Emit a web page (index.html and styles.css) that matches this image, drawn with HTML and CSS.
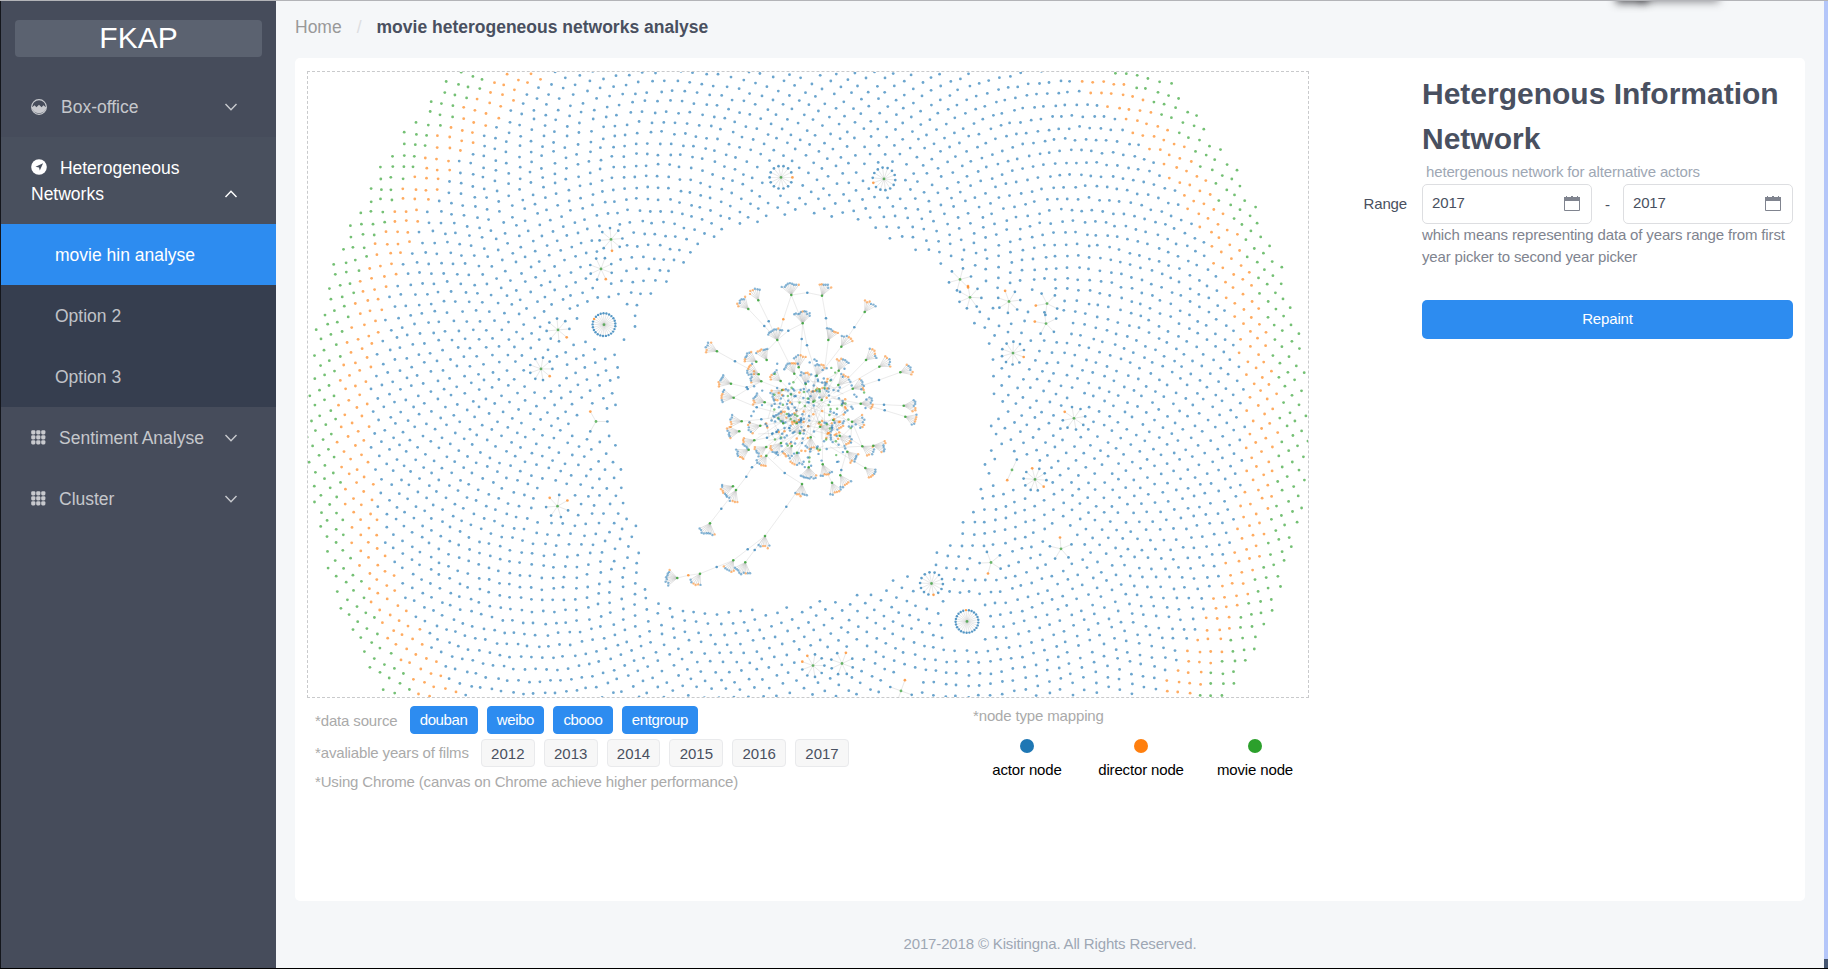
FILE: index.html
```html
<!DOCTYPE html>
<html lang="en">
<head>
<meta charset="utf-8">
<title>FKAP</title>
<link rel="stylesheet" href="styles.css">
</head>
<body>
<div class="app">
  <aside class="sidebar">
    <div class="logo">FKAP</div>
    <nav class="menu">
      <div class="item">
        <svg class="ico" viewBox="0 0 16 16"><circle cx="8" cy="8" r="7.4" fill="none" stroke="currentColor" stroke-width="1.1"/><path d="M.8 8.600 3.6 6.200 5.400 8.200 8 5.800l2.600 2.400 1.800-2 2.800 2.400A7.4 7.4 0 0 1 .8 8.600Z" fill="currentColor"/></svg>
        <span class="label label-box">Box-office</span>
        <svg class="chev" viewBox="0 0 14 14"><path d="M1.5 4 7 9.8 12.5 4" /></svg>
      </div>
      <div class="item item-open">
        <div class="wrapped">
          <svg class="ico" viewBox="0 0 16 16"><circle cx="8" cy="8" r="7.8" fill="currentColor"/><path d="M12.1 4.2 8.8 11.6 8 8.5 4.5 7.8Z" fill="#49505e"/></svg>
          <span class="label-hin">Heterogeneous</span><br>Networks
        </div>
        <svg class="chev" viewBox="0 0 14 14"><path d="M1.5 10 7 4.2 12.5 10" /></svg>
      </div>
      <div class="sub active">movie hin analyse</div>
      <div class="sub">Option 2</div>
      <div class="sub">Option 3</div>
      <div class="item">
        <svg class="grid" viewBox="0 0 15 15"><g fill="currentColor"><rect x=".2" y=".2" width="4.2" height="4.2" rx="1.3"/><rect x="5.2" y=".2" width="4.2" height="4.2" rx="1.3"/><rect x="10.2" y=".2" width="4.2" height="4.2" rx="1.3"/><rect x=".2" y="5.2" width="4.2" height="4.2" rx="1.3"/><rect x="5.2" y="5.2" width="4.2" height="4.2" rx="1.3"/><rect x="10.2" y="5.2" width="4.2" height="4.2" rx="1.3"/><rect x=".2" y="10.2" width="4.2" height="4.2" rx="1.3"/><rect x="5.2" y="10.2" width="4.2" height="4.2" rx="1.3"/><rect x="10.2" y="10.2" width="4.2" height="4.2" rx="1.3"/></g></svg>
        <span class="label">Sentiment Analyse</span>
        <svg class="chev" viewBox="0 0 14 14"><path d="M1.5 4 7 9.8 12.5 4" /></svg>
      </div>
      <div class="item">
        <svg class="grid" viewBox="0 0 15 15"><g fill="currentColor"><rect x=".2" y=".2" width="4.2" height="4.2" rx="1.3"/><rect x="5.2" y=".2" width="4.2" height="4.2" rx="1.3"/><rect x="10.2" y=".2" width="4.2" height="4.2" rx="1.3"/><rect x=".2" y="5.2" width="4.2" height="4.2" rx="1.3"/><rect x="5.2" y="5.2" width="4.2" height="4.2" rx="1.3"/><rect x="10.2" y="5.2" width="4.2" height="4.2" rx="1.3"/><rect x=".2" y="10.2" width="4.2" height="4.2" rx="1.3"/><rect x="5.2" y="10.2" width="4.2" height="4.2" rx="1.3"/><rect x="10.2" y="10.2" width="4.2" height="4.2" rx="1.3"/></g></svg>
        <span class="label">Cluster</span>
        <svg class="chev" viewBox="0 0 14 14"><path d="M1.5 4 7 9.8 12.5 4" /></svg>
      </div>
    </nav>
  </aside>
  <main class="main">
    <div class="crumbs"><span class="home">Home</span><span class="sep">/</span><b>movie heterogeneous networks analyse</b></div>
    <section class="card">
      <div class="left">
        <div class="canvas"><svg id="net" viewBox="308 72 1000 625"></svg></div>
        <div class="info">
          <div class="notes">
            <div class="row"><span class="note">*data source</span><span class="tag blue">douban</span><span class="tag blue">weibo</span><span class="tag blue">cbooo</span><span class="tag blue">entgroup</span></div>
            <div class="row"><span class="note">*avaliable years of films</span><span class="tag">2012</span><span class="tag">2013</span><span class="tag">2014</span><span class="tag">2015</span><span class="tag">2016</span><span class="tag">2017</span></div>
            <div class="row last"><span class="note">*Using Chrome (canvas on Chrome achieve higher performance)</span></div>
          </div>
          <div class="mapping">
            <div class="note">*node type mapping</div>
            <div class="legend">
              <div class="key"><i class="dot actor"></i>actor node</div>
              <div class="key"><i class="dot director"></i>director node</div>
              <div class="key"><i class="dot movie"></i>movie node</div>
            </div>
          </div>
        </div>
      </div>
      <div class="form">
        <h1>Hetergenous Information Network</h1>
        <div class="hint">hetergenous network for alternative actors</div>
        <div class="range">Range</div>
        <div class="pickers">
          <div class="picker">2017<svg class="cal" viewBox="0 0 16 16"><path d="M.5 5V15.500H15.500V5" fill="none" stroke="#80848f" stroke-width="1"/><path d="M0 2H2V1h1v1h4V1h2v1h4V1h1v1h2V6H0Z" fill="#80848f"/></svg></div>
          <span class="dash">-</span>
          <div class="picker">2017<svg class="cal" viewBox="0 0 16 16"><path d="M.5 5V15.500H15.500V5" fill="none" stroke="#80848f" stroke-width="1"/><path d="M0 2H2V1h1v1h4V1h2v1h4V1h1v1h2V6H0Z" fill="#80848f"/></svg></div>
        </div>
        <div class="desc">which means representing data of years range from first year picker to second year picker</div>
        <button class="repaint">Repaint</button>
      </div>
    </section>
    <footer class="footer">2017-2018 © Kisitingna. All Rights Reserved.</footer>
  </main>
  <div class="edge"></div>
  <div class="shade"></div>
</div>
<script src="network.js"></script>
</body>
</html>
```
FILE: styles.css
```css
* { box-sizing: border-box; }
body { margin: 0; font-family: "Liberation Sans", Arial, sans-serif; font-size: 15px; letter-spacing: -.15px; color: #495060; background: #f5f7f9; }
.app { position: relative; display: flex; width: 1828px; height: 969px; overflow: hidden; border-top: 1px solid #b3b4b8; border-bottom: 1px solid #000; }

.sidebar { width: 276px; background: #464c5b; border-left: 1px solid #14161c; flex: none; letter-spacing: 0; }
.logo { margin: 19px 14px 19px; height: 37px; border-radius: 4px; background: #5b6270; color: #fff; font-size: 30px; line-height: 35px; text-align: center; }
.menu { color: rgba(255, 255, 255, .7); font-size: 17.5px; }
.item { display: flex; align-items: center; height: 61px; padding: 0 38px 0 30px; }
.item-open { height: 87px; color: #fff; background: #49505e; align-items: flex-end; padding-bottom: 17px; line-height: 26px; }
.wrapped { flex: 1; }
.ico { width: 16px; height: 16px; flex: none; vertical-align: -1px; }
.grid { width: 15px; height: 15px; flex: none; margin-top: -1px; }
.label { margin-left: 13px; padding-top: 2px; flex: 1; white-space: nowrap; }
.label-box { margin-left: 14px; }
.label-hin { margin-left: 8px; }
.chev { width: 14px; height: 14px; flex: none; fill: none; stroke: currentColor; stroke-width: 1.4; }
.item-open .chev { margin-bottom: 6px; }
.sub { height: 61px; line-height: 63px; padding-left: 54px; background: #363e4f; }
.sub.active { background: #2d8cf0; color: #fff; }

.main { flex: 1; display: flex; flex-direction: column; padding: 0 19px; }
.crumbs { height: 57px; padding-top: 15px; font-size: 17.5px; line-height: 22px; letter-spacing: 0; }
.home { color: #999; }
.sep { color: #dddee1; margin: 0 15px; }
.card { height: 843px; flex: none; display: flex; background: #fff; border-radius: 5px; padding: 13px 12px; }
.left { width: 1002px; flex: none; }
.canvas { height: 627px; border: 1px dashed #c9cacc; }
.canvas svg { display: block; width: 1000px; height: 625px; }
.info { display: flex; padding: 6px 0 0 8px; }
.notes { width: 658px; flex: none; }
.row { display: flex; align-items: center; height: 33px; }
.row:first-child { height: 32px; }
.row.last { height: 25px; }
.note { color: #aaa; }
.row .note { margin-right: 3px; }
.tag { height: 28px; line-height: 27px; padding: 0 9.200px; margin-left: 9.100px; letter-spacing: 0; border: 1px solid #e9eaec; border-radius: 4px; background: #f7f7f7; }
.tag.blue { background: #2d8cf0; border-color: #2d8cf0; color: #fff; letter-spacing: -.4px; line-height: 26px; }
.mapping { flex: none; padding-top: 3px; }
.legend { display: flex; margin: 15px 0 0 -3px; color: #000; }
.key { width: 114px; flex: none; display: flex; flex-direction: column; align-items: center; gap: 8px; white-space: nowrap; }
.dot { width: 14px; height: 14px; border-radius: 50%; }
.actor { background: #1f77b4; }
.director { background: #ff7f0e; }
.movie { background: #2ca02c; }

.form { flex: 1; display: grid; grid-template-columns: 113px 371px; grid-template-rows: 90px 23px 40px 76px 39px; align-content: start; }
.form > * { grid-column: 2; }
h1 { margin: 0; font-size: 30px; line-height: 45px; letter-spacing: 0; }
.hint { color: #9ea7b4; padding-left: 4px; line-height: 21px; }
.form .range { grid-column: 1; grid-row: 3; line-height: 39px; text-align: right; padding-right: 15px; }
.form .pickers { grid-row: 3; display: flex; justify-content: space-between; align-items: center; }
.picker { width: 170px; height: 40px; display: flex; align-items: center; justify-content: space-between; line-height: 36px; border: 1px solid #dddee1; border-radius: 5px; padding: 0 11px 2px 9px; }
.cal { width: 16px; height: 16px; }
.desc { line-height: 22px; color: #80848f; }
.repaint { border: 0; border-radius: 5px; background: #2d8cf0; color: #fff; font: inherit; letter-spacing: inherit; padding: 0 0 2px; }

.footer { padding-top: 34px; text-align: center; color: #9ea7b4; }
.edge { width: 4px; background: linear-gradient(#b4c6f9 958px, #44546f 958px); }
.shade { position: absolute; left: 1640px; top: -12px; width: 78px; height: 11px; box-shadow: 0 1px 8px 1px rgba(70, 70, 75, .6); }
.shade::before { content: ""; position: absolute; left: -22px; top: 0; width: 28px; height: 11px; box-shadow: 0 1px 9px 2px rgba(40, 40, 45, .8); }
```
FILE: network.js
```js
const NS = 'http://www.w3.org/2000/svg';
const svg = document.getElementById('net');
const C = { b: '#1f77b4', o: '#ff7f0e', g: '#2ca02c' };
let seed = 11;
const rnd = () => (seed = (seed * 16807) % 2147483647) / 2147483647;
const lines = [], dots = [];

function line(x1, y1, x2, y2, o) { lines.push([x1, y1, x2, y2, o || 0.5]); }
function dot(x, y, k, r, o) { dots.push([x, y, k, r || 1.4, o || 0.66]); }

// Vertical scale of the layout, measured from y = 150
const tall = y => 150 + (y - 150) * 1.0523;

// Empty area around the connected component
const hole = [[804,213],[854,219],[897,238],[940,259],[952,272],[960,297],[978,322],[990,360],[994,376],[991,408],[988,432],[984,454],[971,488],[951,519],[928,539],[896,558],[844,574],[795,583],[748,587],[703,586],[673,582],[650,573],[639,547],[642,528],[638,508],[628,477],[621,447],[617,417],[618,395],[620,358],[628,338],[635,320],[641,309],[653,290],[672,269],[692,251],[713,233],[735,221],[776,217]].map(([x, y]) => [x, tall(y)]);
function inHole(x, y) {
  let c = false;
  for (let i = 0, j = hole.length - 1; i < hole.length; j = i++) {
    const [xi, yi] = hole[i], [xj, yj] = hole[j];
    if ((yi > y) !== (yj > y) && x < (xj - xi) * (y - yi) / (yj - yi) + xi) c = !c;
  }
  return c;
}

// Small stars: centre, leaf count, angles of the director leaves
const stars = [[781,176,14,[0]],[884,177.5,14,[160]],[604,316,25,[-150]],[967,598,25,[-95]],[931.5,562,14,[80]],[611,235,8,[85]],[601,263,8,[65]],[558,321,8,[40]],[541,358,9,[40]],[596,408,3,[-120]],[557.5,488.5,7,[-30,-137]],[813,640,9,[-120,-160]],[842,638,8,[-70]],[970,290,7,[-100]],[960,273,6,[45]],[1009,294,7,[-110]],[1047,296,5,[170]],[1046,315,5,[-170]],[1013,343,10,[20]],[1074,405,8,[-145]],[1012,454,2,[115]],[1035,463,10,[40,-95]],[1061,529,5,[-95]],[991,542,5,[105]],[901,664,4,[-70]]].map(([x, y, n, os]) => [x, tall(y), n, os]);

// Free nodes packed in a disc, ringed by director and movie nodes
const cx = 807.5, cy = 428, step = 6.3, golden = Math.PI * (3 - Math.sqrt(5));
for (let n = 1; ; n++) {
  const r = step * Math.sqrt(n);
  if (r > 501) break;
  const a = n * golden;
  const x = cx + r * Math.cos(a) + (rnd() - 0.5) * 2.6, y = cy + r * Math.sin(a) + (rnd() - 0.5) * 2.6;
  if (y < 71 || y > 698 || inHole(x, y)) continue;
  if (stars.some(s => Math.hypot(s[0] - x, s[1] - y) < (s[2] > 20 ? 24 : 17))) continue;
  dot(x, y, r > 471 ? 'g' : r > 438 ? 'o' : 'b');
}
for (const [x, y, n, os] of stars) {
  const base = os[0] * Math.PI / 180;
  const R = 11.4;
  for (let i = 0; i < n; i++) {
    const a = base + i * 2 * Math.PI / n;
    const deg = ((a * 180 / Math.PI - (os[1] === undefined ? 1e3 : os[1])) % 360 + 540) % 360 - 180;
    const px = x + R * Math.cos(a), py = y + R * Math.sin(a);
    line(x, y, px, py, 0.8);
    dot(px, py, i === 0 || (os.length > 1 && Math.abs(deg) < 180 / n) ? 'o' : 'b', n > 20 ? 1.2 : 1.35, n > 20 ? 0.75 : 0.7);
  }
  dot(x, y, 'g');
}

// Connected component, in units of a third of a pixel from (640, 260)
const X = v => 640 + v / 3, Y = v => 260 + v / 3;
const fans = [[325,147,303,125],[355,121,343,92],[454,105,450,72],[546,107,557,74],[488,190,488,155],[412,240,403,210],[674,156,692,127],[565,240,578,210],[604,260,622,232],[231,274,202,260],[273,371,237,360],[281,413,248,408],[349,305,325,290],[380,300,365,270],[356,343,328,328],[364,364,333,350],[305,484,268,482],[298,514,265,518],[374,427,340,415],[361,497,330,505],[343,541,308,553],[326,569,298,585],[379,561,350,578],[379,587,360,615],[279,679,248,692],[288,690,275,720],[210,790,198,822],[375,828,372,860],[316,907,305,938],[280,901,265,930],[180,941,165,970],[112,954,80,952],[486,672,482,707],[576,668,590,703],[601,646,620,678],[548,613,560,645],[506,622,506,655],[471,578,468,610],[676,624,702,645],[622,575,648,600],[667,559,692,575],[700,557,735,562],[636,485,672,483],[796,470,828,482],[791,437,827,438],[662,431,695,428],[638,386,670,372],[781,337,815,325],[718,320,747,303],[678,300,703,278],[596,332,608,302],[595,375,618,352],[530,347,545,312],[497,372,497,340],[476,322,478,290],[463,341,450,312],[422,363,400,345],[427,390,405,405],[455,558,440,585],[423,549,405,568],[512,532,512,565],[599,527,625,545],[520,425,520,400],[545,420,550,390],[430,490,418,462],[470,490,455,465],[480,520,460,500],[540,500,560,505],[580,480,600,495]];
const dense = { 2: 9, 4: 11, 5: 9, 26: 9, 31: 9, 36: 10, 28: 9 };
fans.forEach(([hx, hy, tx, ty], f) => {
  const a0 = Math.atan2(ty - hy, tx - hx), r = 34;
  const n = dense[f] || 6 + Math.floor(rnd() * 2), off = Math.floor(rnd() * n);
  for (let i = 0; i < n; i++) {
    const a = a0 + (i / (n - 1) - 0.5) * (n > 8 ? 1.5 : 1.05);
    const rr = r + (rnd() - 0.5) * 8;
    const px = hx + rr * Math.cos(a), py = hy + rr * Math.sin(a);
    line(X(hx), Y(hy), X(px), Y(py), 1.1);
    dot(X(px), Y(py), (i + off) % n < (n > 8 ? 1 : 3) ? 'o' : 'b', 1.2, 0.52);
  }
  dot(X(hx), Y(hy), 'g', 1.3, 0.8);
  if (Math.hypot(hx - 510, hy - 455) < 190) line(X(hx), Y(hy), X(490 + rnd() * 60), Y(430 + rnd() * 60), 0.6);
});
const chains = [[325,147,373,198,412,240],[355,121,386,184,412,240],[454,105,502,98,546,107],[454,105,430,178,412,240],[454,105,488,190],[412,240,445,212,488,190],[546,107,558,175,565,240],[565,240,555,320],[674,156,643,202,604,260],[604,260,550,330],[488,190,485,237,480,300],[488,190,501,256,530,347],[412,240,463,341],[412,240,364,290],[231,274,285,304,356,343],[273,371,320,382,364,364],[281,413,323,387,364,364],[281,413,350,442,420,460],[781,337,717,360,638,386],[718,320,580,400],[678,300,600,380],[791,437,732,434,662,431],[796,470,734,451,662,431],[662,431,580,415],[676,624,570,560],[700,557,550,565],[636,485,667,559],[636,485,632,540],[601,646,604,630,620,575],[576,668,548,613],[486,672,434,639,379,587],[486,672,439,740,375,828],[375,828,323,868,280,901],[375,828,344,870,316,907],[280,901,230,921,180,941],[180,941,145,946,112,954],[210,790,244,746,288,690],[288,690,319,650,336,622,379,587],[379,587,440,500],[305,484,364,478,420,470],[343,541,381,533,440,500]];
for (const c of chains) {
  for (let i = 0; i + 3 < c.length; i += 2) {
    line(X(c[i]), Y(c[i + 1]), X(c[i + 2]), Y(c[i + 3]), 0.7);
    if (i) dot(X(c[i]), Y(c[i + 1]), c[i] === 430 || c[i] === 145 ? 'o' : 'b', 1.3, 0.72);
  }
}
for (let i = 0; i < 210; i++) {
  const a = rnd() * 2 * Math.PI, r = 134 * Math.sqrt(rnd());
  const x = 508 + r * Math.cos(a), y = 464 + r * 0.9 * Math.sin(a), p = rnd();
  dot(X(x), Y(y), p < 0.66 ? 'b' : p < 0.83 ? 'o' : 'g', 1.25, 0.58);
  if (i % 2) line(X(x), Y(y), X(x + (rnd() - 0.5) * 90), Y(y + (rnd() - 0.5) * 90), 0.7);
}
for (let i = 0; i < 45; i++) {
  const a = rnd() * 2 * Math.PI, r = 130 + 50 * rnd();
  dot(X(505 + r * Math.cos(a)), Y(455 + r * Math.sin(a)), rnd() < 0.7 ? 'b' : 'g', 1.2, 0.6);
}

function add(tag, attrs) {
  const e = document.createElementNS(NS, tag);
  for (const k in attrs) e.setAttribute(k, attrs[k]);
  svg.appendChild(e);
}
for (const [x1, y1, x2, y2, o] of lines) add('line', { x1, y1, x2, y2, stroke: '#bbb', 'stroke-width': 0.55, opacity: Math.min(1, o * 0.75) });
for (const [x, y, k, r, o] of dots) add('circle', { cx: x.toFixed(1), cy: y.toFixed(1), r, fill: C[k], opacity: o });
```
